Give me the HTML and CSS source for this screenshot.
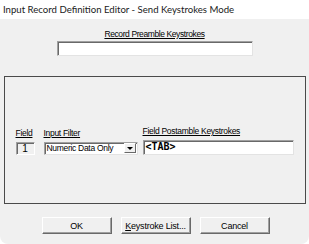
FILE: index.html
```html
<!DOCTYPE html>
<html lang="en">
<head>
    <meta charset="UTF-8">
    <title>Input Record Definition Editor - Send Keystrokes Mode</title>
    <link rel="stylesheet" href="styles.css">
</head>
<body>
    <div class="window">
        <div class="titlebar">Input Record Definition Editor - Send Keystrokes Mode</div>
        <div class="dialog">
            <div class="preamble">
                <label class="caption" for="preamble">Record Preamble Keystrokes</label>
                <input type="text" id="preamble" class="edit preamble-edit">
            </div>

            <div class="groupbox">
                <div class="fields">
                    <div class="field-col">
                        <span class="caption">Field</span>
                        <div class="field-num">1</div>
                    </div>
                    <div class="field-col">
                        <span class="caption">Input Filter</span>
                        <div class="combo">
                            <span class="combo-text">Numeric Data Only</span>
                            <span class="combo-btn"><span class="arrow"></span></span>
                        </div>
                    </div>
                    <div class="field-col">
                        <span class="caption">Field Postamble Keystrokes</span>
                        <div class="edit postamble-edit">&lt;TAB&gt;</div>
                    </div>
                </div>
            </div>

            <div class="buttons">
                <button type="button" class="btn">OK</button>
                <button type="button" class="btn"><u>K</u>eystroke List...</button>
                <button type="button" class="btn">Cancel</button>
            </div>
        </div>
    </div>
</body>
</html>
```

FILE: styles.css
```css
/* Window frame */
body {
    margin: 0;
    padding: 0;
    background: #fff;
}

.window {
    width: 309px;
    height: 244px;
    display: flex;
    flex-direction: column;
}

.titlebar {
    height: 19px;
    line-height: 19px;
    padding-left: 3px;
    font-family: Lato, "Open Sans", sans-serif;
    font-size: 9.6px;
    color: #1a1a1a;
    white-space: nowrap;
}

.dialog {
    flex: 1;
    background: #f0f0f0;
    border-radius: 0 0 8px 8px;
    padding-top: 10px;
    display: flex;
    flex-direction: column;
    align-items: center;
    font-family: "Liberation Sans", Arial, sans-serif;
    font-size: 8.5px;
    letter-spacing: -0.3px;
    color: #000;
}

.caption {
    display: block;
    line-height: 11px;
    text-decoration: underline;
    white-space: nowrap;
}

.preamble .caption {
    letter-spacing: -0.4px;
}

/* Sunken edit boxes */
.edit {
    box-sizing: border-box;
    background: #fff;
    border: 1px solid;
    border-color: #a0a0a0 #e3e3e3 #e3e3e3 #a0a0a0;
    box-shadow: inset 1px 1px 0 #696969;
    outline: none;
}

.preamble {
    display: flex;
    flex-direction: column;
    align-items: center;
    gap: 1px;
}

.preamble-edit {
    width: 196px;
    height: 15px;
    margin: 0;
    padding: 0;
}

/* Group box */
.groupbox {
    box-sizing: border-box;
    width: 302px;
    height: 128px;
    margin-top: 20px;
    border: 1px solid #4a4a4a;
    display: flex;
    flex-direction: column;
    justify-content: flex-end;
    padding: 0 0 48px 11px;
}

.fields {
    display: flex;
    align-items: flex-end;
}

.field-col {
    display: flex;
    flex-direction: column;
    gap: 3px;
}

.field-col + .field-col {
    margin-left: 9px;
}

.field-col:last-child {
    margin-left: 5px;
}

.field-num {
    box-sizing: border-box;
    width: 19px;
    height: 13px;
    border: 1px solid;
    border-color: #a0a0a0 #fff #fff #a0a0a0;
    box-shadow: inset 1px 1px 0 #696969;
    text-align: center;
    font-size: 10px;
    letter-spacing: 0;
    line-height: 12px;
}

.combo {
    box-sizing: border-box;
    width: 94px;
    height: 13px;
    background: #fff;
    border: 1px solid;
    border-color: #a0a0a0 #e3e3e3 #e3e3e3 #a0a0a0;
    box-shadow: inset 1px 1px 0 #696969;
    display: flex;
    align-items: stretch;
}

.combo-text {
    flex: 1;
    padding-left: 2px;
    line-height: 11px;
    white-space: nowrap;
    overflow: hidden;
}

.combo-btn {
    width: 12px;
    margin: 0 1px 1px 0;
    background: #f0f0f0;
    border: 1px solid;
    border-color: #fff #696969 #696969 #fff;
    box-sizing: border-box;
    display: flex;
    align-items: center;
    justify-content: center;
}

.arrow {
    width: 0;
    height: 0;
    border-left: 3px solid transparent;
    border-right: 3px solid transparent;
    border-top: 3px solid #000;
}

.postamble-edit {
    width: 151px;
    height: 15px;
    padding-left: 2px;
    font-family: "DejaVu Sans Mono", monospace;
    font-weight: bold;
    font-size: 10px;
    letter-spacing: 0;
    line-height: 12px;
}

/* Bottom buttons */
.buttons {
    display: flex;
    gap: 9px;
    margin-top: 13px;
    padding-left: 2px;
}

.btn {
    box-sizing: border-box;
    width: 70px;
    height: 17px;
    padding: 0;
    background: #f0f0f0;
    border: 1px solid;
    border-color: #fff #696969 #696969 #fff;
    box-shadow: inset -1px -1px 0 #a0a0a0;
    font-family: "Liberation Sans", Arial, sans-serif;
    font-size: 9px;
    letter-spacing: -0.2px;
    color: #000;
}
```
